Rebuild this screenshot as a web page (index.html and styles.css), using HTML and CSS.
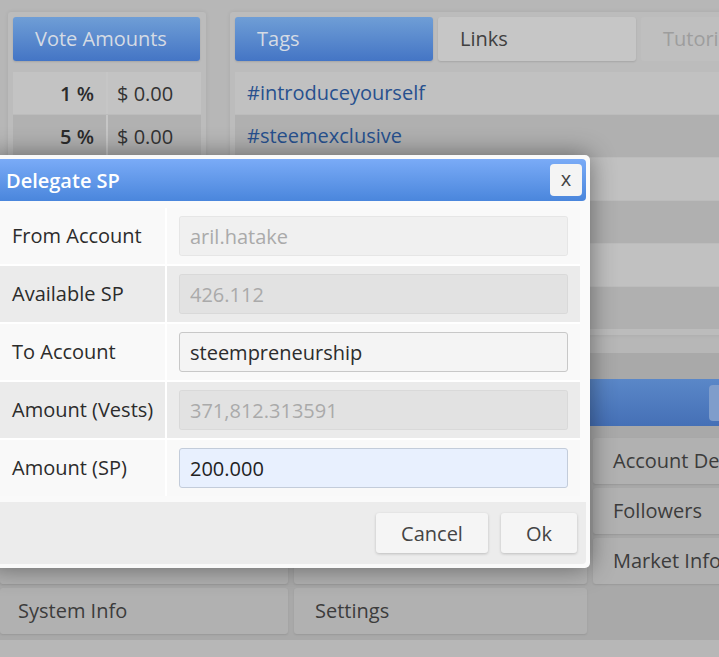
FILE: index.html
```html
<!DOCTYPE html>
<html>

<head>
    <meta charset="utf-8">
    <link rel="stylesheet" href="styles.css">
</head>

<body>
    <div class="page">
        <div class="top">
            <section class="panel votes">
                <div class="tabs">
                    <div class="tab active">Vote Amounts</div>
                </div>
                <table class="vote-table">
                    <tr>
                        <td class="pct">1 %</td>
                        <td class="usd">$ 0.00</td>
                    </tr>
                    <tr>
                        <td class="pct">5 %</td>
                        <td class="usd">$ 0.00</td>
                    </tr>
                </table>
            </section>

            <section class="panel tags">
                <div class="tabs">
                    <div class="tab active">Tags</div>
                    <div class="tab">Links</div>
                    <div class="tab muted">Tutorials</div>
                </div>
                <ul class="tag-list">
                    <li><a href="#">#introduceyourself</a></li>
                    <li><a href="#">#steemexclusive</a></li>
                    <li></li>
                    <li></li>
                    <li></li>
                    <li></li>
                </ul>
            </section>
        </div>

        <section class="tools">
            <div class="tools-bar">
                <span class="bar-btn"></span>
            </div>
            <div class="menu">
                <div class="menu-btn"></div>
                <div class="menu-btn"></div>
                <div class="menu-btn">Account Details</div>
                <div class="menu-btn"></div>
                <div class="menu-btn"></div>
                <div class="menu-btn">Followers</div>
                <div class="menu-btn"></div>
                <div class="menu-btn"></div>
                <div class="menu-btn">Market Info</div>
                <div class="menu-btn">System Info</div>
                <div class="menu-btn">Settings</div>
            </div>
        </section>
    </div>

    <!-- delegate dialog -->
    <div class="dialog">
        <div class="dialog-title">
            <span>Delegate SP</span>
            <button class="close-btn">x</button>
        </div>
        <div class="dialog-body">
            <div class="form">
                <div class="label">From Account</div>
                <div class="field"><input type="text" value="aril.hatake" readonly></div>

                <div class="label alt">Available SP</div>
                <div class="field alt"><input type="text" value="426.112" readonly></div>

                <div class="label">To Account</div>
                <div class="field"><input type="text" class="editable" value="steempreneurship"></div>

                <div class="label alt">Amount (Vests)</div>
                <div class="field alt"><input type="text" value="371,812.313591" readonly></div>

                <div class="label">Amount (SP)</div>
                <div class="field"><input type="text" class="editable focused" value="200.000"></div>
            </div>
        </div>
        <div class="dialog-buttons">
            <button class="btn cancel">Cancel</button>
            <button class="btn ok">Ok</button>
        </div>
    </div>
</body>

</html>
```

FILE: styles.css
```css
* {
    box-sizing: border-box;
}

body {
    margin: 0;
    width: 719px;
    height: 657px;
    overflow: hidden;
    position: relative;
    background-color: #b7b7b7;
    font-family: "Open Sans", "Noto Sans", sans-serif;
    font-size: 20px;
    color: #3d3d3d;
}

.page {
    width: 1000px;
}

/* top panels */
.top {
    display: flex;
    align-items: stretch;
    gap: 24px;
    padding: 12px 0 0 8px;
}

.panel {
    background-color: #bcbcbc;
    border-radius: 3px;
    padding: 5px;
    box-shadow: 0 0 4px rgba(0, 0, 0, 0.08);
}

.votes {
    width: 198px;
}

.tags {
    width: 760px;
}

.tabs {
    display: flex;
    gap: 5px;
}

.tab {
    width: 198px;
    height: 44px;
    line-height: 44px;
    padding-left: 22px;
    border-radius: 3px;
    background-color: #c6c6c6;
    color: #404040;
    box-shadow: 0 1px 2px rgba(0, 0, 0, 0.12);
}

.votes .tab {
    width: 187px;
}

.tab.active {
    background: linear-gradient(#6f9ed6, #4475c5);
    color: #d5dbe4;
}

.tab.muted {
    background-color: #bfbfbf;
    color: #9d9d9d;
    box-shadow: none;
}

.vote-table {
    margin-top: 10px;
    width: 188px;
    border-collapse: separate;
    border-spacing: 0 1px;
}

.vote-table td {
    height: 42px;
    padding: 0;
    background-color: #c3c3c3;
}

.vote-table tr:nth-child(2) td {
    background-color: #b1b1b1;
}

.vote-table .pct {
    width: 95px;
    text-align: right;
    padding-right: 12px;
    font-weight: 600;
    color: #2b2b2b;
    border-right: 2px solid #c6c6c6;
}

.vote-table .usd {
    padding-left: 9px;
    color: #333;
}

.tag-list {
    list-style: none;
    margin: 11px 0 0;
    padding: 0;
}

.tag-list li {
    height: 42px;
    line-height: 42px;
    margin-bottom: 1px;
    padding-left: 12px;
    background-color: #c1c1c1;
}

.tag-list li:nth-child(even) {
    background-color: #b0b0b0;
}

.tag-list a {
    color: #27508e;
    text-decoration: none;
}

/* tools section */
.tools {
    margin-top: 18px;
    padding: 26px 0 6px;
    background-color: #a9a9a9;
}

.tools-bar {
    height: 47px;
    padding: 6px 0 0 709px;
    background: linear-gradient(#5a87c8, #4570b6);
}

.bar-btn {
    display: block;
    width: 180px;
    height: 36px;
    border-radius: 4px;
    background-color: #7f9dcb;
}

.menu {
    display: grid;
    grid-template-columns: 288px 293px 293px;
    grid-auto-rows: 46px;
    gap: 4px 6px;
    margin-top: 12px;
}

.menu-btn {
    padding-left: 20px;
    line-height: 46px;
    border-radius: 3px;
    background-color: #b1b1b1;
    color: #3c3c3c;
    box-shadow: 0 1px 2px rgba(0, 0, 0, 0.1);
    white-space: nowrap;
}

.menu-btn:nth-child(10) {
    padding-left: 18px;
}

.menu-btn:nth-child(11) {
    padding-left: 21px;
}

/* dialog */
.dialog {
    position: absolute;
    left: -11px;
    top: 155px;
    width: 601px;
    padding: 4px;
    background-color: #fafafa;
    border-radius: 5px;
    box-shadow: 0 0 26px rgba(0, 0, 0, 0.45);
}

.dialog-title {
    display: flex;
    align-items: center;
    justify-content: space-between;
    height: 42px;
    padding: 0 4px 0 13px;
    border-radius: 4px;
    background: linear-gradient(#7aabf7, #4a86dc);
    color: #fff;
    font-weight: 600;
}

.close-btn {
    width: 32px;
    height: 32px;
    padding: 0 0 4px;
    border: none;
    border-radius: 4px;
    background-color: #f4f4f4;
    font-family: inherit;
    font-size: 20px;
    color: #444;
}

.dialog-body {
    padding: 7px 6px 0 7px;
}

.form {
    display: grid;
    grid-template-columns: 165px 1fr;
    gap: 2px;
    background-color: #fff;
}

.label {
    height: 56px;
    line-height: 56px;
    padding-left: 12px;
    background-color: #f9f9f9;
    color: #2c2c2c;
}

.field {
    height: 56px;
    padding: 8px 12px;
    background-color: #f9f9f9;
}

.alt {
    background-color: #ebebeb;
}

.field input {
    width: 100%;
    height: 40px;
    padding: 0 10px;
    border: 1px solid rgba(0, 0, 0, 0.045);
    border-radius: 3px;
    background-color: rgba(0, 0, 0, 0.035);
    font-family: inherit;
    font-size: 20px;
    color: #aaa;
    outline: none;
}

.field input.editable {
    background-color: #f4f4f4;
    border-color: #c8c8c8;
    color: #2c2c2c;
}

.field input.focused {
    background-color: #e8f0fe;
    border-color: #c3ccda;
    color: #222;
}

.dialog-buttons {
    display: flex;
    justify-content: flex-end;
    gap: 13px;
    margin-top: 6px;
    height: 62px;
    padding: 11px 9px 11px 0;
    background-color: #ececec;
    border-radius: 0 0 4px 4px;
}

.btn {
    height: 40px;
    border: none;
    border-radius: 3px;
    background-color: #f5f5f5;
    box-shadow: 0 1px 3px rgba(0, 0, 0, 0.2);
    font-family: inherit;
    font-size: 20px;
    color: #444;
}

.btn.cancel {
    width: 112px;
}

.btn.ok {
    width: 76px;
}
```
